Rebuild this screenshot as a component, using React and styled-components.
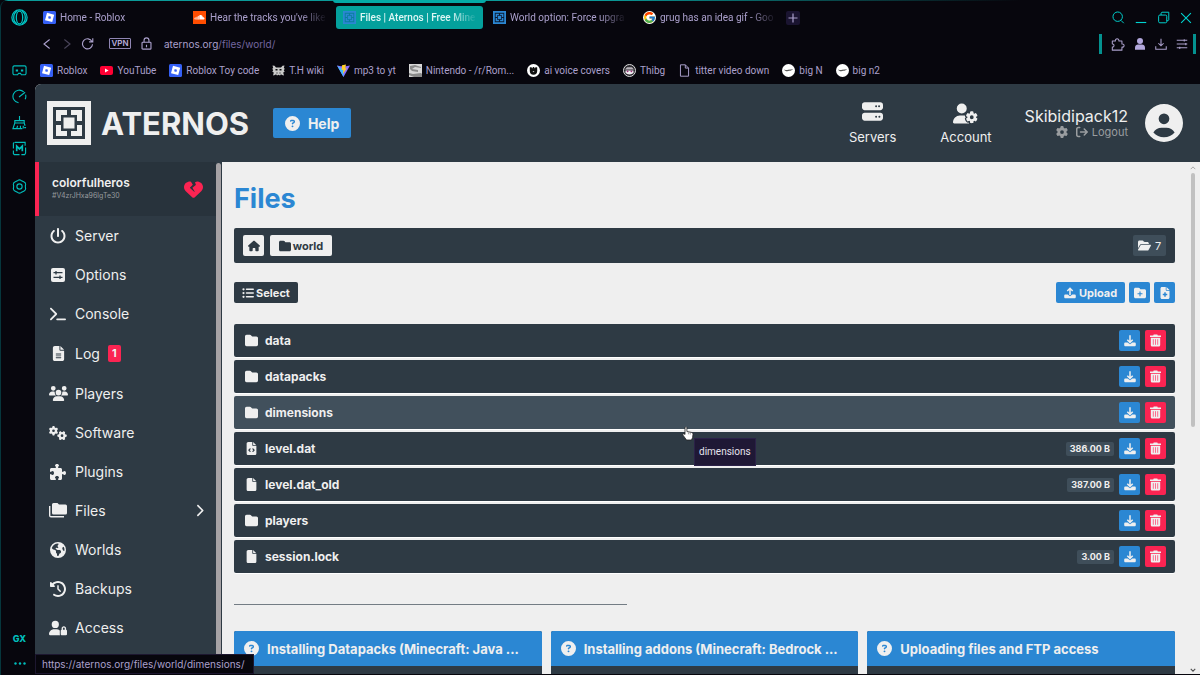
import React from "react";
import styled, { createGlobalStyle, css } from "styled-components";
import {
    FaCircleQuestion, FaServer, FaUserGear, FaGear, FaArrowRightFromBracket,
    FaCircleUser, FaHeartCrack, FaPowerOff, FaTerminal, FaFileLines, FaUsers,
    FaGears, FaPuzzlePiece, FaEarthAmericas, FaClockRotateLeft, FaUserLock,
    FaChevronRight, FaHouse, FaFolder, FaFolderOpen, FaListUl, FaFolderPlus,
    FaFileMedical, FaFileCode, FaFile,
} from "react-icons/fa6";
import { FcGoogle } from "react-icons/fc";

const GlobalStyle = createGlobalStyle`
    * {
        box-sizing: border-box;
    }
    body {
        margin: 0;
        background: #07060d;
        font-family: Inter, "Noto Sans", sans-serif;
    }
    button {
        font-family: inherit;
        border: none;
        padding: 0;
        cursor: pointer;
    }
    a {
        color: inherit;
        text-decoration: none;
    }
    h1, h2, p, ul {
        margin: 0;
        padding: 0;
    }
    ul {
        list-style: none;
    }
    svg {
        display: block;
        flex-shrink: 0;
    }
`

/* ---------- small drawings ---------- */

const Line = ({ size = 14, w = 1.2, color = "currentColor", children }) => (
    <svg width={size} height={size} viewBox="0 0 16 16" fill="none" stroke={color} strokeWidth={w}>
        {children}
    </svg>
)

const OperaLogo = () => (
    <svg width="17" height="17" viewBox="0 0 17 17" fill="none" stroke="#00c4c4" strokeWidth="1.3">
        <circle cx="8.5" cy="8.5" r="7.6" />
        <ellipse cx="8.5" cy="8.5" rx="3.2" ry="6.4" />
        <path d="M6 2.2C1.6 4.6 1.6 12.4 6 14.8M11 2.2c4.4 2.4 4.4 10.2 0 12.6" />
    </svg>
)

const RobloxIcon = () => (
    <svg width="13" height="13" viewBox="0 0 13 13">
        <rect width="13" height="13" rx="1.5" fill="#3560f5" />
        <path d="M4 1.8l7.2 1.9-2 7.4L2 9.2z" fill="#fff" />
        <path d="M5.7 5.1l2.3.6-.6 2.2-2.3-.6z" fill="#3560f5" />
    </svg>
)

const SoundcloudIcon = () => (
    <svg width="13" height="13" viewBox="0 0 13 13">
        <rect width="13" height="13" fill="#ff4d00" />
        <path d="M6.3 8.6V4.4c1.8-.8 3.3.2 3.5 1.8 2.2-.2 2.2 2.4.4 2.4z" fill="#fff" />
        <path d="M5.4 8.6V4.9M4.2 8.6V5.6M3 8.6V6.2M1.9 8.3V6.8" stroke="#fff" strokeWidth=".8" />
    </svg>
)

const YoutubeIcon = () => (
    <svg width="13" height="13" viewBox="0 0 13 13">
        <rect y="2" width="13" height="9" rx="2" fill="#ff0033" />
        <path d="M5 4.5l3.6 2L5 8.5z" fill="#fff" />
    </svg>
)

const WikiIcon = () => (
    <svg width="13" height="13" viewBox="0 0 13 13" fill="#c9c9c9">
        <path d="M.5 1.5l2 .3L4 3.500h5l1.500-1.700 2-.3-.7 2.500 1 .8-1 1.500.9 1.500-1.500.7.8 3-2-.5-1-.8L8 11.500 6.500 10.800 5 11.500l-1-1.300-1 .8-2 .5.8-3L.3 7.800l.9-1.500-1-1.500 1-.8z" />
        <path d="M3.500 5h2v1.500h-2zM7.500 5h2v1.500h-2zM4.500 8.500h1v1h-1zM7.500 8.500h1v1h-1z" fill="#111" />
    </svg>
)

const ViteIcon = () => (
    <svg width="13" height="13" viewBox="0 0 13 13">
        <path d="M0 1.5L6.500 13 13 1.500 9 2.200H4z" fill="#8c6cff" />
        <path d="M0 1.5L6.500 13V6z" fill="#41b8ff" />
        <path d="M9 .5L5 1.300 4.700 6l1.600-.3-.4 4 4-5.500-1.700.2z" fill="#ffd028" />
    </svg>
)

const NintendoIcon = () => (
    <svg width="13" height="13" viewBox="0 0 13 13">
        <rect width="13" height="13" fill="#d8d8d8" />
        <path d="M0 9l4 1 8-1 1 1v3H5L0 11zM1 2l5-1 6 2v1L6 3 3 5l6 1v2L3 7 1 5z" fill="#8a8a8a" />
    </svg>
)

const VoiceIcon = () => (
    <svg width="13" height="13" viewBox="0 0 13 13">
        <circle cx="6.500" cy="6.500" r="6.500" fill="#fff" />
        <path d="M2.800 3.500l1.500-.5.8 1.500L6 3h1l.9 1.500L8.700 3l1.500.5v3.500a3.700 3.700 0 0 1-7.400 0z" fill="#111" />
        <path d="M5.500 7.300h2l-1 1z" fill="#fff" />
    </svg>
)

const ThibgIcon = () => (
    <svg width="13" height="13" viewBox="0 0 13 13">
        <circle cx="6.500" cy="6.500" r="6" fill="#2c2a30" stroke="#ddd" />
        <path d="M2.500 6.500h8v2.600a4.600 2.600 0 0 1-8 0z" fill="#f2eef2" />
        <path d="M2 5.500l2-2.200h5l2 2.200z" fill="#b9b4bb" />
        <circle cx="4.600" cy="7.300" r=".9" fill="#a0307c" />
        <circle cx="8.400" cy="7.300" r=".9" fill="#a0307c" />
    </svg>
)

const SwitchIcon = () => (
    <svg width="13" height="13" viewBox="0 0 13 13">
        <circle cx="6.500" cy="6.500" r="6.500" fill="#fff" />
        <path d="M2 5.500c2 .6 3 .8 4 .3l5-.6c-1 1-2 1.400-3.500 1.600C5.500 7.500 3 7.500 2 5.500z" fill="#555" />
    </svg>
)

const PageIcon = () => (
    <Line size={13}>
        <path d="M3 1h6l4 4v10H3zM9 1v4h4" />
    </Line>
)

const Brackets = ({ size, fg, bg }) => (
    <svg width={size} height={size} viewBox="0 0 44 44">
        <rect width="44" height="44" fill={fg} />
        <rect x="6" y="6" width="32" height="32" fill={bg} />
        <path d="M9 9h11v11H9zM24 9h11v11H24zM9 24h11v11H9zM24 24h11v11H24z" fill={fg} />
        <rect x="14" y="14" width="16" height="16" fill={bg} />
        <rect x="16.500" y="16.500" width="11" height="11" fill={fg} />
    </svg>
)

const SlidersIcon = () => (
    <svg width="14" height="14" viewBox="0 0 14 14">
        <rect width="14" height="14" rx="2" fill="currentColor" />
        <path d="M2.500 4.700h9M2.500 9.300h9M5 3v3.400M9 7.600V11" stroke="#2e3a44" strokeWidth="1.300" />
    </svg>
)

const FoldersIcon = () => (
    <svg width="18" height="15" viewBox="0 0 18 15" fill="currentColor">
        <path d="M4.500 0h4l1.500 1.500h6.500A1.500 1.500 0 0 1 18 3v7a1.500 1.500 0 0 1-1.500 1.500h-12A1.500 1.500 0 0 1 3 10V1.500A1.500 1.500 0 0 1 4.500 0z" />
        <path d="M.7 3v9.500c0 .8.500 1.300 1.300 1.300h13" fill="none" stroke="currentColor" strokeWidth="1.400" />
    </svg>
)

const TrayIcon = ({ up }) => (
    <svg width="12" height="12" viewBox="0 0 12 12" fill="currentColor">
        <path d="M1.500 7.500h2.200L6 9.200l2.300-1.700h2.200c.8 0 1.300.5 1.300 1.200V10c0 .8-.5 1.300-1.300 1.300h-9C.7 11.300.2 10.800.2 10V8.700c0-.7.5-1.200 1.300-1.200z" />
        <path
            d={up ? "M6 8V1.500M3.300 4L6 1.300 8.700 4" : "M6 .3v7M3.300 4.800L6 7.500l2.700-2.700"}
            fill="none"
            stroke="currentColor"
            strokeWidth="1.500"
        />
    </svg>
)

const TrashIcon = () => (
    <svg width="11" height="13" viewBox="0 0 11 13">
        <path d="M3.700.5h3.600l.5 1H11V3H0V1.500h3.200z" fill="#efefef" />
        <path d="M.8 3.700h9.400V11c0 .9-.5 1.500-1.400 1.500H2.200c-.9 0-1.400-.6-1.400-1.500z" fill="#efefef" />
        <path d="M3.300 5.200v5.600M5.500 5.200v5.600M7.700 5.200v5.600" stroke="#fb6c8d" strokeWidth="1" />
    </svg>
)

const HandCursor = () => (
    <svg width="12" height="15" viewBox="0 0 12 15">
        <path
            d="M3.300 1c.9-.4 1.600.1 1.600.9v3.600l4.600.9c1 .2 1.600.9 1.500 1.900l-.4 3.200L9.500 14h-5L1 9.200c-.6-.9.300-1.900 1.300-1.300l.7.6V1.700z"
            fill="#fff"
            stroke="#222"
            strokeWidth=".8"
        />
        <path d="M6.400 6.500v1.800M8.200 6.800v1.700" stroke="#555" strokeWidth=".6" />
    </svg>
)

/* ---------- data ---------- */

const tabs = [
    { title: "Home - Roblox", icon: <RobloxIcon /> },
    { title: "Hear the tracks you've like", icon: <SoundcloudIcon /> },
    { title: "Files | Aternos | Free Mine", icon: <Brackets size={13} fg="#2b87d3" bg="#087f9c" />, active: true },
    { title: "World option: Force upgra", icon: <Brackets size={13} fg="#2b87d3" bg="#0b1c33" /> },
    { title: "grug has an idea gif - Goo", icon: <FcGoogle size={13} />, round: true },
]

const bookmarks = [
    ["Roblox", <RobloxIcon />],
    ["YouTube", <YoutubeIcon />],
    ["Roblox Toy code", <RobloxIcon />],
    ["T.H wiki", <WikiIcon />],
    ["mp3 to yt", <ViteIcon />],
    ["Nintendo - /r/Rom...", <NintendoIcon />],
    ["ai voice covers", <VoiceIcon />],
    ["Thibg", <ThibgIcon />],
    ["titter video down", <PageIcon />],
    ["big N", <SwitchIcon />],
    ["big n2", <SwitchIcon />],
]

const menu = [
    { label: "Server", icon: <FaPowerOff size={16} /> },
    { label: "Options", icon: <SlidersIcon /> },
    { label: "Console", icon: <FaTerminal size={16} /> },
    { label: "Log", icon: <FaFileLines size={15} />, badge: 1 },
    { label: "Players", icon: <FaUsers size={19} /> },
    { label: "Software", icon: <FaGears size={18} /> },
    { label: "Plugins", icon: <FaPuzzlePiece size={16} /> },
    { label: "Files", icon: <FoldersIcon />, open: true },
    { label: "Worlds", icon: <FaEarthAmericas size={16} /> },
    { label: "Backups", icon: <FaClockRotateLeft size={16} /> },
    { label: "Access", icon: <FaUserLock size={18} /> },
]

const files = [
    { name: "data", icon: <FaFolder size={13} /> },
    { name: "datapacks", icon: <FaFolder size={13} /> },
    { name: "dimensions", icon: <FaFolder size={13} />, hover: true },
    { name: "level.dat", icon: <FaFileCode size={13} />, size: "386.00 B" },
    { name: "level.dat_old", icon: <FaFile size={13} />, size: "387.00 B" },
    { name: "players", icon: <FaFolder size={13} /> },
    { name: "session.lock", icon: <FaFile size={13} />, size: "3.00 B" },
]

const articles = [
    "Installing Datapacks (Minecraft: Java ...",
    "Installing addons (Minecraft: Bedrock ...",
    "Uploading files and FTP access",
]

/* ---------- browser ---------- */

const Browser = () => (
    <>
        <TabRow>
            <LogoCell aria-label="Opera menu"><OperaLogo /></LogoCell>
            <TabList>
                {tabs.map((t) => (
                    <Tab key={t.title} $active={t.active}>
                        <TabIcon $round={t.round}>{t.icon}</TabIcon>
                        <TabTitle>{t.title}</TabTitle>
                    </Tab>
                ))}
                <NewTab aria-label="New tab">
                    <Line size={12} w={1.6}><path d="M8 2v12M2 8h12" /></Line>
                </NewTab>
            </TabList>
            <WindowButtons>
                <IconButton aria-label="Search"><Line size={13}><circle cx="7" cy="7" r="5.800" /><path d="M11 11.500l3.500 3.500" /></Line></IconButton>
                <IconButton aria-label="Minimize"><Line size={12} w={1.5}><path d="M1 14h14" /></Line></IconButton>
                <IconButton aria-label="Restore"><Line size={13}><rect x="2" y="5" width="10" height="9.500" rx="1.500" /><path d="M5 5V2.500L6 1.500h8.500V11l-1 1H12" /></Line></IconButton>
                <IconButton aria-label="Close"><Line size={12} w={1.5}><path d="M1.500 1.500l13 13M14.500 1.500l-13 13" /></Line></IconButton>
            </WindowButtons>
        </TabRow>
        <AddressRow>
            <NavButtons>
                <IconButton aria-label="Back"><Line size={12} w={1.5}><path d="M11.500 2L4 8l7.500 6" /></Line></IconButton>
                <IconButton aria-label="Forward" $dim><Line size={12} w={1.5}><path d="M4.500 2L12 8l-7.500 6" /></Line></IconButton>
                <IconButton aria-label="Reload"><Line size={13} w={1.4}><path d="M13.500 5.500A6.200 6.200 0 1 0 14.200 9M14.500 1.500v4.500H10" /></Line></IconButton>
            </NavButtons>
            <Vpn>VPN</Vpn>
            <Line size={13} w={1.4}><rect x="2.500" y="6.500" width="11" height="8.500" rx="1" /><path d="M5 6.500V4a3 3 0 0 1 6 0v2.500M8 9.500v3" /></Line>
            <Url>aternos.org<span>/files/world/</span></Url>
            <Extensions>
                <IconButton aria-label="Extensions"><Line size={14}><path d="M1.500 4.500H5c-.6-3.300 4.600-3.300 4 0h3.500V8c3.300-.6 3.300 4.100 0 3.500V15h-11v-3.500c2.600.3 2.600-3.800 0-3.500z" strokeLinejoin="round" /></Line></IconButton>
                <IconButton aria-label="Profile">
                    <svg width="12" height="12" viewBox="0 0 12 12" fill="#b3a8dd"><circle cx="6" cy="3" r="3" /><path d="M1 11.800V9.500C1 7.500 2.500 6.500 4 6.500h4c1.500 0 3 1 3 3v2.300z" /></svg>
                </IconButton>
                <IconButton aria-label="Downloads"><Line size={12} w={1.4}><path d="M8 1v9.500M4.500 7L8 10.500 11.500 7M1 11v4h14v-4" /></Line></IconButton>
                <IconButton aria-label="Easy setup"><Line size={12} w={1.4}><path d="M1 3h14M1 8h14M1 13h14M11 1.500v3M13 6.500v3M5 11.500v3" /></Line></IconButton>
            </Extensions>
        </AddressRow>
    </>
)

const Rail = () => (
    <RailWrap>
        <RailTop>
            <IconButton aria-label="Corner">
                <Line size={15}>
                    <path d="M2.500 3h11a1.500 1.500 0 0 1 1.500 1.500V11a1.500 1.500 0 0 1-1.500 1.500H10L9 11H7l-1 1.500H2.500A1.500 1.500 0 0 1 1 11V4.500A1.500 1.500 0 0 1 2.500 3z" />
                    <path d="M4 7h2.500v2H4zM9.500 7H12v2H9.500z" fill="currentColor" stroke="none" />
                </Line>
            </IconButton>
            <IconButton aria-label="Limiter"><Line size={15}><path d="M12.500 3A6.800 6.800 0 1 0 7 14.700M14.500 6A7 7 0 0 1 14 11M7.500 8.500L14 3.500" /></Line></IconButton>
            <IconButton aria-label="Cleaner"><Line size={15}><path d="M8 1v5M3 6h10v2.500H3zM3 8.500L1 14.500h10M13 8.500l1 3M5 14.500l1-3M9 14.500v-3M13 13.500h2M12 14.500v-3" /></Line></IconButton>
            <IconButton aria-label="Mods"><Line size={15}><path d="M3 1.500h11V5M14.500 7v6l-1 1.500H10M8 14.500H2.500l-1-1V10M1.500 8V2.500l1-1" /><path d="M5 11V5.500l3 3 3-3V11" strokeWidth="1.800" /></Line></IconButton>
        </RailTop>
        <IconButton aria-label="Settings">
            <Line size={15}>
                <path d="M6.300 1.500Q8 .3 9.700 1.500L13 3.300q1.700.7 1.500 2.700-.5 2 0 4 .2 2-1.500 2.700l-3.300 1.800q-1.700 1.200-3.400 0L3 12.700Q1.300 12 1.500 10q.5-2 0-4Q1.300 4 3 3.300z" />
                <circle cx="8" cy="8" r="2.800" />
            </Line>
        </IconButton>
        <RailBottom>
            <Gx>GX</Gx>
            <IconButton aria-label="More"><svg width="12" height="3" viewBox="0 0 12 3" fill="currentColor"><circle cx="1.500" cy="1.500" r="1.200" /><circle cx="6" cy="1.500" r="1.200" /><circle cx="10.500" cy="1.500" r="1.200" /></svg></IconButton>
        </RailBottom>
    </RailWrap>
)

/* ---------- page ---------- */

const Header = () => (
    <HeaderBar>
        <Brand href="#">
            <Brackets size={44} fg="#efefef" bg="#2e3a44" />
            <span>ATERNOS</span>
        </Brand>
        <HelpButton><FaCircleQuestion size={15} />Help</HelpButton>
        <HeaderLinks>
            <HeaderLink href="#"><FaServer size={21} />Servers</HeaderLink>
            <HeaderLink href="#"><FaUserGear size={25} />Account</HeaderLink>
        </HeaderLinks>
        <User>
            <UserName>Skibidipack12</UserName>
            <UserActions>
                <FaGear size={12} />
                <a href="#"><FaArrowRightFromBracket size={12} />Logout</a>
            </UserActions>
        </User>
        <FaCircleUser size={38} />
    </HeaderBar>
)

const Sidebar = () => (
    <SideWrap>
        <SideInner>
            <ServerCard>
                <div>
                    <ServerName>colorfulheros</ServerName>
                    <ServerId>#V4zrJHxa96lgTe30</ServerId>
                </div>
                <FaHeartCrack size={19} color="#fb2452" />
            </ServerCard>
            <ul>
                {menu.map((m) => (
                    <li key={m.label}>
                        <MenuLink href="#">
                            <MenuIcon>{m.icon}</MenuIcon>
                            {m.label}
                            {m.badge && <Badge>{m.badge}</Badge>}
                            {m.open && <Chevron><FaChevronRight size={13} /></Chevron>}
                        </MenuLink>
                    </li>
                ))}
            </ul>
        </SideInner>
        <SideThumb />
    </SideWrap>
)

const FileList = () => (
    <Rows>
        {files.map((f) => (
            <Row key={f.name} $hover={f.hover}>
                <RowIcon>{f.icon}</RowIcon>
                <RowName href="#">{f.name}</RowName>
                {f.size && <Size>{f.size}</Size>}
                <Square aria-label={"Download " + f.name}><TrayIcon /></Square>
                <Square aria-label={"Delete " + f.name} $red><TrashIcon /></Square>
            </Row>
        ))}
    </Rows>
)

const App = () => {
    return (
        <Frame>
            <GlobalStyle />
            <Browser />
            <Body>
                <Rail />
                <Right>
                    <Bookmarks>
                        {bookmarks.map(([name, icon]) => (
                            <Bookmark key={name} href="#">{icon}{name}</Bookmark>
                        ))}
                    </Bookmarks>
                    <Page>
                        <Header />
                        <Main>
                            <Sidebar />
                            <Content>
                                <Title>Files</Title>
                                <PathBar>
                                    <PathButton aria-label="Home"><FaHouse size={12} /></PathButton>
                                    <PathButton $wide><FaFolder size={12} />world</PathButton>
                                    <Count><FaFolderOpen size={13} />7</Count>
                                </PathBar>
                                <Tools>
                                    <SelectButton><FaListUl size={12} />Select</SelectButton>
                                    <UploadButton><TrayIcon up />Upload</UploadButton>
                                    <Square aria-label="New folder"><FaFolderPlus size={12} /></Square>
                                    <Square aria-label="New file"><FaFileMedical size={12} /></Square>
                                </Tools>
                                <FileList />
                                <Divider />
                                <Cards>
                                    {articles.map((a) => (
                                        <Card key={a}>
                                            <CardHead><FaCircleQuestion size={15} /><h2>{a}</h2></CardHead>
                                        </Card>
                                    ))}
                                </Cards>
                            </Content>
                            <Scroll>
                                <Line size={6} w={2.5} color="#a5a5a5"><path d="M2 11l6-6 6 6" /></Line>
                                <ScrollThumb />
                                <Line size={6} w={3} color="#505050"><path d="M2 5l6 6 6-6" /></Line>
                            </Scroll>
                        </Main>
                    </Page>
                </Right>
            </Body>
            <Status>https://aternos.org/files/world/dimensions/</Status>
            <Pointer><HandCursor /></Pointer>
            <Tooltip role="tooltip">dimensions</Tooltip>
        </Frame>
    )
}

const Frame = styled.div`
    position: relative;
    display: flex;
    flex-direction: column;
    height: 100vh;
    overflow: hidden;
    padding-bottom: 1px;
    background: linear-gradient(to right, #0b9a98 0%, #0b9a98 50%, #07060d 85%) top / 100% 1px no-repeat #07060d;
    border-left: 1px solid #06363c;
    border-top-left-radius: 8px;
    color: #aba0cc;
    font-size: 10px;
`

const TabRow = styled.header`
    display: flex;
    align-items: center;
    height: 29px;
    padding-top: 6px;
`

const IconButton = styled.button`
    display: flex;
    align-items: center;
    justify-content: center;
    background: none;
    color: inherit;
    opacity: ${(p) => (p.$dim ? 0.4 : 1)};
`

const LogoCell = styled(IconButton)`
    flex: 0 0 35px;
    height: 23px;
    padding-left: 2px;
`

const TabList = styled.div`
    display: flex;
    align-items: center;
    flex: 1;
    min-width: 0;
    gap: 3px;
`

const Tab = styled.button`
    position: relative;
    display: flex;
    align-items: center;
    gap: 4px;
    flex: 0 1 147px;
    min-width: 0;
    height: 23px;
    padding: 0 6px 0 7px;
    border-radius: 3px;
    background: none;
    color: inherit;
    font-family: Roboto, Inter, sans-serif;
    font-size: 10px;
    text-align: left;
    ${(p) => p.$active && css`
        background: #04a09c;
        color: #dcf6f4;
        font-weight: 500;
        &::before {
            content: "";
            position: absolute;
            top: -6px;
            left: -3px;
            right: -3px;
            height: 3px;
            background: #04a9a6;
            border-radius: 0 0 3px 3px;
        }
    `}
`

const TabIcon = styled.span`
    flex-shrink: 0;
    background: ${(p) => (p.$round ? "#fff" : "none")};
    border-radius: ${(p) => (p.$round ? "50%" : "0")};
`

const TabTitle = styled.span`
    flex: 1;
    white-space: nowrap;
    mask-image: linear-gradient(to right, #000 calc(100% - 28px), transparent);
`

const NewTab = styled(IconButton)`
    width: 14px;
    height: 14px;
    background: #1a1430;
    border-radius: 2px;
`

const WindowButtons = styled.div`
    display: flex;
    align-items: center;
    gap: 10px;
    padding-right: 8px;
    color: #00d3d0;
`

const AddressRow = styled.div`
    display: flex;
    align-items: center;
    height: 29px;
    padding: 0 4px 0 40px;
`

const NavButtons = styled.div`
    display: flex;
    gap: 8px;
    margin-right: 15px;
`

const Vpn = styled.button`
    height: 11px;
    width: 22px;
    margin-right: 9px;
    border: 1px solid #8f85b3;
    border-radius: 1px;
    background: none;
    color: #b9aedd;
    font-size: 8px;
    line-height: 9px;
    font-weight: 600;
`

const Url = styled.div`
    margin-left: 11px;
    font-size: 10px;
    span {
        color: #7367a0;
    }
`

const Extensions = styled.div`
    display: flex;
    align-items: center;
    gap: 9px;
    height: 20px;
    margin-left: auto;
    padding: 0 5px 0 9px;
    border: solid #04918f;
    border-width: 0 3px;
`

const Body = styled.div`
    display: flex;
    flex: 1;
    min-height: 0;
`

const RailWrap = styled.nav`
    display: flex;
    flex-direction: column;
    align-items: center;
    gap: 23px;
    flex: 0 0 34px;
    padding: 5px 0 9px 3px;
    color: #00bdbb;
`

const RailTop = styled.div`
    display: flex;
    flex-direction: column;
    gap: 11px;
`

const RailBottom = styled.div`
    display: flex;
    flex-direction: column;
    align-items: center;
    gap: 18px;
    margin-top: auto;
`

const Gx = styled.span`
    font-size: 9px;
    font-weight: 800;
`

const Right = styled.div`
    display: flex;
    flex-direction: column;
    flex: 1;
    min-width: 0;
`

const Bookmarks = styled.nav`
    display: flex;
    align-items: center;
    gap: 13px;
    flex: 0 0 26px;
    padding: 0 0 2px 5px;
    font-family: Roboto, Inter, sans-serif;
    white-space: nowrap;
`

const Bookmark = styled.a`
    display: flex;
    align-items: center;
    gap: 4px;
`

const Page = styled.div`
    display: flex;
    flex-direction: column;
    flex: 1;
    min-height: 0;
    overflow: hidden;
    border-top-left-radius: 6px;
    background: #efefef;
    color: #efefef;
`

const HeaderBar = styled.header`
    display: flex;
    align-items: center;
    flex: 0 0 78px;
    padding: 0 17px 0 12px;
    background: #2e3a44;
`

const Brand = styled.a`
    display: flex;
    align-items: center;
    gap: 10px;
    font-size: 31px;
    font-weight: 700;
`

const HelpButton = styled.button`
    display: flex;
    align-items: center;
    justify-content: center;
    gap: 8px;
    width: 78px;
    height: 30px;
    margin-left: 24px;
    border-radius: 2px;
    background: #2b87d3;
    color: #efefef;
    font-size: 14px;
    font-weight: 700;
`

const HeaderLinks = styled.nav`
    display: flex;
    gap: 44px;
    margin: 0 33px 0 auto;
`

const HeaderLink = styled.a`
    display: flex;
    flex-direction: column;
    align-items: center;
    justify-content: space-between;
    height: 44px;
    font-size: 13px;
    line-height: 16px;
`

const User = styled.div`
    display: flex;
    flex-direction: column;
    align-items: flex-end;
    margin-right: 17px;
`

const UserName = styled.a`
    font-size: 16px;
    line-height: 17px;
`

const UserActions = styled.div`
    display: flex;
    align-items: center;
    gap: 8px;
    color: #9a9da0;
    font-size: 11px;
    line-height: 14px;
    a {
        display: flex;
        align-items: center;
        gap: 4px;
    }
`

const Main = styled.div`
    display: flex;
    flex: 1;
    min-height: 0;
`

const SideWrap = styled.aside`
    display: flex;
    flex: 0 0 187px;
    overflow: hidden;
    background: #2e3a44;
`

const SideInner = styled.div`
    flex: 1;
`

const SideThumb = styled.div`
    width: 5px;
    margin: 1px 1px 0 0;
    border-radius: 3px;
    background: #a6a2a5;
`

const ServerCard = styled.div`
    display: flex;
    align-items: center;
    justify-content: space-between;
    height: 54px;
    padding: 0 13px;
    border-left: 4px solid #fb2452;
    background: #28333c;
`

const ServerName = styled.p`
    font-size: 12px;
    line-height: 14px;
    font-weight: 600;
`

const ServerId = styled.p`
    color: #979b9e;
    font-size: 7px;
    line-height: 12px;
`

const MenuLink = styled.a`
    display: flex;
    align-items: center;
    padding: 10px 10px 10px 11px;
    font-size: 14px;
    line-height: 19px;
`

const MenuIcon = styled.span`
    display: flex;
    justify-content: center;
    width: 24px;
    margin-right: 5px;
`

const Badge = styled.span`
    margin: 2px 0 2px 8px;
    padding: 0 4px;
    border-radius: 2px;
    background: #fb2452;
    font-size: 11px;
    line-height: 17px;
    font-weight: 700;
`

const Chevron = styled.span`
    margin-left: auto;
`

const Content = styled.main`
    flex: 1;
    min-width: 0;
    padding: 20px 11px 0 12px;
`

const Title = styled.h1`
    color: #2b87d3;
    font-size: 27px;
    line-height: 34px;
    font-weight: 700;
`

const bar = css`
    display: flex;
    align-items: center;
    border-radius: 2px;
    background: #2e3a44;
`

const PathBar = styled.nav`
    ${bar}
    gap: 6px;
    height: 35px;
    margin-top: 12px;
    padding: 0 9px;
`

const control = css`
    display: flex;
    align-items: center;
    justify-content: center;
    height: 21px;
    border-radius: 2px;
    font-size: 11px;
    font-weight: 700;
`

const PathButton = styled.button`
    ${control}
    gap: 2px;
    width: ${(p) => (p.$wide ? "62px" : "21px")};
    background: #efefef;
    color: #2e3a44;
`

const Count = styled.span`
    ${control}
    gap: 4px;
    width: 33px;
    margin-left: auto;
    background: #3f4e5a;
    font-weight: 400;
`

const Tools = styled.div`
    display: flex;
    gap: 4px;
    margin: 19px 0 21px;
`

const SelectButton = styled.button`
    ${control}
    gap: 2px;
    width: 64px;
    margin-right: auto;
    background: #2e3a44;
    color: #efefef;
`

const UploadButton = styled.button`
    ${control}
    gap: 3px;
    width: 69px;
    background: #2b87d3;
    color: #efefef;
`

const Square = styled.button`
    ${control}
    width: 21px;
    background: ${(p) => (p.$red ? "#fb2452" : "#2b87d3")};
    color: #efefef;
`

const Rows = styled.ul`
    display: flex;
    flex-direction: column;
    gap: 3px;
`

const Row = styled.li`
    ${bar}
    gap: 5px;
    height: 33px;
    padding: 0 9px;
    background: ${(p) => (p.$hover ? "#41505c" : "#2e3a44")};
    box-shadow: 0 1px 0 #fff;
`

const RowIcon = styled.span`
    display: flex;
    justify-content: center;
    width: 17px;
`

const RowName = styled.a`
    flex: 1;
    font-size: 12px;
    font-weight: 700;
`

const Size = styled.span`
    padding: 0 4px;
    border-radius: 2px;
    background: #3f4e5a;
    font-size: 9px;
    line-height: 14px;
    font-weight: 700;
`

const Divider = styled.hr`
    width: 393px;
    max-width: 100%;
    margin: 31px 0 26px;
    border: none;
    border-top: 1px solid #737c84;
`

const Cards = styled.section`
    display: grid;
    grid-template-columns: repeat(3, 1fr);
    gap: 9px;
`

const Card = styled.article`
    min-width: 0;
    min-height: 120px;
    border-radius: 2px;
    overflow: hidden;
    background: #2e3a44;
`

const CardHead = styled.div`
    display: flex;
    align-items: center;
    gap: 8px;
    height: 35px;
    padding: 0 14px 0 10px;
    background: #2b87d3;
    h2 {
        overflow: hidden;
        white-space: nowrap;
        text-overflow: ellipsis;
        font-size: 13px;
        font-weight: 700;
    }
`

const Scroll = styled.div`
    display: flex;
    flex-direction: column;
    align-items: center;
    flex: 0 0 14px;
    padding: 3px 0 1px;
`

const ScrollThumb = styled.div`
    width: 4px;
    height: 50%;
    margin: 2px 0 auto;
    border-radius: 2px;
    background: #c1c1c1;
`

const Status = styled.div`
    position: absolute;
    left: 34px;
    bottom: 1px;
    padding: 0 8px 0 6px;
    border: 1px solid #1d1730;
    background: #07060d;
    font-size: 10px;
    line-height: 18px;
`

const Pointer = styled.div`
    position: absolute;
    left: 681px;
    top: 426px;
`

const Tooltip = styled.div`
    position: absolute;
    left: 693px;
    top: 438px;
    padding: 0 4px;
    border: 1px solid #2b2148;
    background: #1f1835;
    color: #e6e3ee;
    font-family: Roboto, sans-serif;
    font-size: 10px;
    line-height: 26px;
`

export default App
